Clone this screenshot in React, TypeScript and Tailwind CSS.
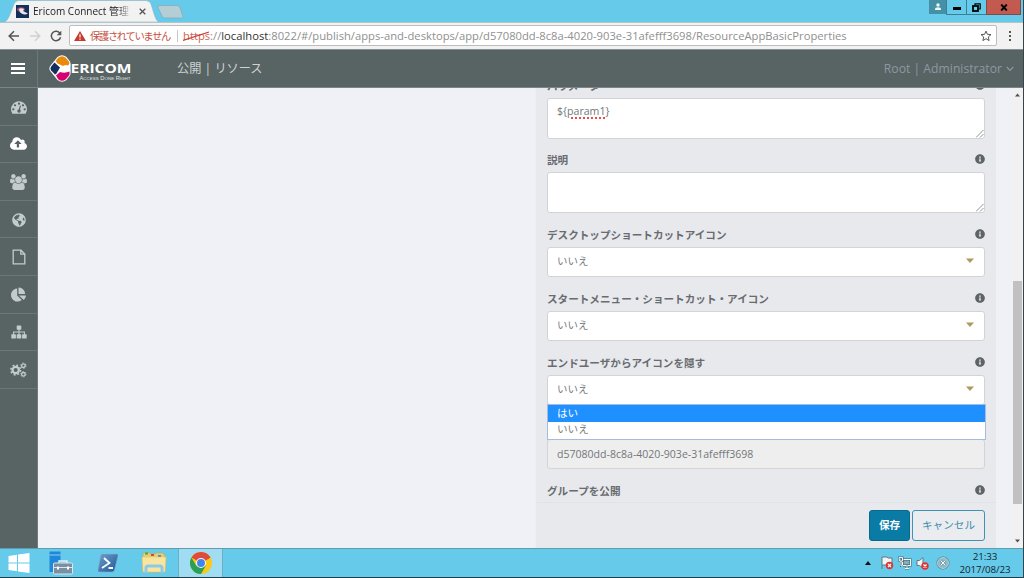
import type { ReactNode } from 'react';
import { FaChartPie, FaGlobeAmericas, FaInfoCircle } from 'react-icons/fa';

//SIDEBAR ICONS
const DashboardIcon = () => (
	<svg viewBox="0 0 1792 1792" className="w-4 h-4" fill="currentColor">
		<path d="M384 1152q0-53-37.5-90.5t-90.5-37.5-90.5 37.5-37.5 90.5 37.5 90.5 90.5 37.5 90.5-37.5 37.5-90.5zm192-448q0-53-37.5-90.5t-90.5-37.5-90.5 37.5-37.5 90.5 37.5 90.5 90.5 37.5 90.5-37.5 37.5-90.5zm428 481l101-382q6-26-7.5-48.5t-38.5-29.5-48 6.5-30 39.5l-101 382q-60 5-107 43.5t-63 98.5q-20 77 20 146t117 89 146-20 89-117q16-60-6-117t-72-91zm660-33q0-53-37.5-90.5t-90.5-37.5-90.5 37.5-37.5 90.5 37.5 90.5 90.5 37.5 90.5-37.5 37.5-90.5zm-640-640q0-53-37.5-90.5t-90.5-37.5-90.5 37.5-37.5 90.5 37.5 90.5 90.5 37.5 90.5-37.5 37.5-90.5zm448 192q0-53-37.5-90.5t-90.5-37.5-90.5 37.5-37.5 90.5 37.5 90.5 90.5 37.5 90.5-37.5 37.5-90.5zm320 448q0 261-141 483-19 29-54 29h-1402q-35 0-54-29-141-221-141-483 0-182 71-348t191-286 286-191 348-71 348 71 286 191 191 286 71 348z" />
	</svg>
);

const CloudIcon = () => (
	<svg viewBox="-64 0 1920 1792" className="w-[17px] h-4" fill="currentColor">
		<path d="M1216 864q0-14-9-23l-352-352q-9-9-23-9t-23 9l-351 351q-10 12-10 24 0 14 9 23t23 9h224v352q0 13 9.5 22.5t22.5 9.5h192q13 0 22.5-9.5t9.5-22.5v-352h224q13 0 22.5-9.5t9.5-22.5zm640 288q0 159-112.5 271.5t-271.5 112.5h-1088q-185 0-316.5-131.5t-131.5-316.5q0-130 70-240t188-165q-2-30-2-43 0-212 150-362t362-150q156 0 285.5 87t188.5 231q71-62 166-62 106 0 181 75t75 181q0 76-41 138 130 31 213.5 135.5t83.5 238.5z" />
	</svg>
);

const UsersIcon = () => (
	<svg viewBox="64 0 1920 1792" className="w-[17px] h-4" fill="currentColor">
		<path d="M657 896q-162 5-265 128h-134q-82 0-138-40.5t-56-118.5q0-353 124-353 6 0 43.5 21t97.5 42.5 119 21.5q67 0 133-23-5 37-5 66 0 139 81 256zm1071 637q0 120-73 189.5t-194 69.5h-874q-121 0-194-69.5t-73-189.5q0-53 3.5-103.5t14-109 26.5-108.5 43-97.5 62-81 85.5-53.5 111.5-20q10 0 43 21.5t73 48 107 48 135 21.5 135-21.5 107-48 73-48 43-21.5q61 0 111.5 20t85.5 53.5 62 81 43 97.5 26.5 108.5 14 109 3.5 103.5zm-1024-1277q0 106-75 181t-181 75-181-75-75-181 75-181 181-75 181 75 75 181zm704 384q0 159-112.5 271.5t-271.5 112.5-271.5-112.5-112.5-271.5 112.5-271.5 271.5-112.5 271.5 112.5 112.5 271.5zm576 225q0 78-56 118.5t-138 40.5h-134q-103-123-265-128 81-117 81-256 0-29-5-66 66 23 133 23 59 0 119-21.5t97.5-42.5 43.5-21q124 0 124 353zm-128-609q0 106-75 181t-181 75-181-75-75-181 75-181 181-75 181 75 75 181z" />
	</svg>
);

const FileIcon = () => (
	<svg viewBox="0 0 14 16" width="14" height="16" fill="none" stroke="currentColor" strokeWidth="1.300">
		<path d="M1.200 1.200H9L12.800 5V14.800H1.200ZM8.800 1.200V5.200H12.800" />
	</svg>
);

const SitemapIcon = () => (
	<svg viewBox="0 0 16 14" width="16" height="14" fill="currentColor">
		<rect x="5.700" y="0.500" width="4.600" height="4.200" rx="0.600" />
		<rect x="0.300" y="9.300" width="4.600" height="4.200" rx="0.600" />
		<rect x="5.700" y="9.300" width="4.600" height="4.200" rx="0.600" />
		<rect x="11.100" y="9.300" width="4.600" height="4.200" rx="0.600" />
		<path d="M8 4V10M2.600 10V7H13.400V10" fill="none" stroke="currentColor" strokeWidth="1.100" />
	</svg>
);

const CogsIcon = () => (
	<svg viewBox="0 0 17 16" width="17" height="16" fill="none" stroke="currentColor">
		<circle cx="5.700" cy="8" r="3.200" strokeWidth="2.200" />
		<circle cx="5.700" cy="8" r="4.900" strokeWidth="1.500" strokeDasharray="1.900 1.948" />
		<circle cx="13.400" cy="3.700" r="1.800" strokeWidth="1.300" />
		<circle cx="13.400" cy="3.700" r="2.700" strokeWidth="0.900" strokeDasharray="1.300 1.527" />
		<circle cx="13.400" cy="12.300" r="1.800" strokeWidth="1.300" />
		<circle cx="13.400" cy="12.300" r="2.700" strokeWidth="0.900" strokeDasharray="1.300 1.527" />
	</svg>
);

const menu = [
	{ id: 'dashboard', icon: <DashboardIcon /> },
	{ id: 'publish', icon: <CloudIcon />, active: true },
	{ id: 'users', icon: <UsersIcon /> },
	{ id: 'globe', icon: <FaGlobeAmericas size={14} /> },
	{ id: 'file', icon: <FileIcon /> },
	{ id: 'reports', icon: <FaChartPie size={15} /> },
	{ id: 'sitemap', icon: <SitemapIcon /> },
	{ id: 'settings', icon: <CogsIcon /> },
];

//BROWSER TABS + WINDOW BUTTONS
function TabStrip() {
	return (
		<div className="relative flex h-[22px] bg-[#66caea]">
			<svg className="absolute left-0 top-0" width="190" height="22">
				<path d="M4 22 C8 21 9 17 14 4 Q15.500 0.500 19 0.500 H146 Q149.500 0.500 151 4 C155 17 156 21 159 22 Z" fill="#f2f2f2" stroke="#8cb3bf" strokeWidth="0.6" />
				<path d="M159 5.500 H177 Q179 5.500 180 7.500 L182.500 15.500 Q183.500 18 181.500 18 H165 Q163 18 162 16 L158 7.500 Q157.500 5.500 159 5.500 Z" fill="#b5cdd5" stroke="#81aab7" strokeWidth="0.7" />
			</svg>
			<div className="relative flex h-[22px] w-[160px] items-center pl-4">
				<svg width="13" height="13" viewBox="0 0 13 13">
					<rect width="13" height="13" fill="#12305a" />
					<ellipse cx="5" cy="4.500" rx="3.800" ry="2.200" fill="#a84a68" />
					<path d="M3 4 Q5 2.500 8 4 L7 6 12 8.500 Q9 10.500 5.500 8.500 Q3 7 3 4Z" fill="#e8e7ee" />
				</svg>
				<div className="ml-[4px] w-[98px] whitespace-nowrap text-[10px] leading-[14px] text-[#222] [mask-image:linear-gradient(to_right,black_86%,transparent)]">
					Ericom Connect 管理コ
				</div>
				<svg className="ml-[8px]" width="7" height="7" viewBox="0 0 7 7">
					<path d="M.7 .7 6.300 6.300M6.300 .7 .7 6.300" stroke="#555" strokeWidth="1.300" />
				</svg>
			</div>
			<div className="ml-auto flex h-[15px] pr-[2px]">
				<div className="flex w-[17px] h-[14px] items-center justify-center bg-[#4690a5]">
					<svg width="8" height="8" viewBox="0 0 8 8" fill="#eef6f8">
						<circle cx="4" cy="2" r="1.700" />
						<path d="M1 7V5.500Q1 4.500 4 4.300 7 4.500 7 5.500V7Z" />
					</svg>
				</div>
				<div className="flex w-[21px] justify-center border border-t-0 border-[#3f7d90]">
					<div className="mt-[7px] h-[3px] w-[8px] bg-black" />
				</div>
				<div className="flex w-[19px] items-center justify-center border-b border-[#3f7d90]">
					<svg width="9" height="9" viewBox="0 0 9 9" fill="none" stroke="#000">
						<path d="M3 2V.800H8.200V6H7" strokeWidth="1.200" />
						<rect x="1" y="3" width="5" height="5" strokeWidth="1.800" />
					</svg>
				</div>
				<div className="flex w-[35px] items-center justify-center border border-t-0 border-[#7c4b4c] bg-[#c35a50]">
					<svg width="8" height="7" viewBox="0 0 8 7">
						<path d="M1.200 .5 6.800 6.500M6.800 .5 1.200 6.500" stroke="#000" strokeWidth="1.900" />
					</svg>
				</div>
			</div>
		</div>
	);
}

function AddressBar() {
	return (
		<div className="flex h-[27px] items-center border-t border-[#b4c5ca] bg-[#f2f2f2] pr-1">
			<svg className="ml-2 mb-px" width="12" height="12" viewBox="0 0 12 12" fill="none" stroke="#555" strokeWidth="1.500">
				<path d="M11 6H1.500M6 1.200 1.200 6 6 10.800" />
			</svg>
			<svg className="ml-[9px] mb-px" width="12" height="12" viewBox="0 0 12 12" fill="none" stroke="#d0d0d0" strokeWidth="1.400">
				<path d="M1 6H10.500M6 1.200 10.800 6 6 10.800" />
			</svg>
			<svg className="ml-[9px] mb-px" width="12" height="12" viewBox="0 0 12 12">
				<path d="M10 3.400A4.700 4.700 0 1 0 10.600 7.200" fill="none" stroke="#555" strokeWidth="1.500" />
				<path d="M11.300 .7V5.300H6.700Z" fill="#555" />
			</svg>
			<div className="ml-[7px] mb-px flex h-[21px] w-[928px] items-center rounded-[2px] border border-[#bdbdbd] bg-white pl-1">
				<svg width="12" height="10" viewBox="0 0 12 10" className="shrink-0">
					<path d="M6 0 12 10H0Z" fill="#c73a2d" />
					<path d="M6 3.200V6.500M6 7.400V8.700" stroke="#fff" strokeWidth="1.200" />
				</svg>
				<div className="ml-[4px] w-[82px] shrink-0 whitespace-nowrap text-[10.3px] tracking-[-1.35px] leading-[14px] text-[#c6503f]">保護されていません</div>
				<div className="ml-[5px] h-3 w-px bg-[#c8c8c8]" />
				<div className="ml-[5px] whitespace-nowrap text-[11.23px] leading-[14px] text-[#909090]">
					<span className="relative text-[#d26256]">
						https
						<svg className="absolute left-0 top-[2px]" width="27" height="12">
							<path d="M0 10.500 26 2" stroke="#c73a2d" strokeWidth="1.300" />
						</svg>
					</span>
					://<span className="text-[#333]">localhost</span>:8022/#/publish/apps-and-desktops/app/d57080dd-8c8a-4020-903e-31afefff3698/ResourceAppBasicProperties
				</div>
				<svg className="ml-auto mr-1" width="12" height="12" viewBox="0 0 12 12">
					<path d="M6 1.100 7.400 4.300 11 4.600 8.300 7 9.100 10.600 6 8.700 2.900 10.600 3.700 7 1 4.600 4.600 4.300Z" fill="none" stroke="#555" strokeWidth="1" />
				</svg>
			</div>
			<div className="ml-[12px] flex flex-col gap-[2px]">
				<div className="h-[2px] w-[2px] bg-[#555]" />
				<div className="h-[2px] w-[2px] bg-[#555]" />
				<div className="h-[2px] w-[2px] bg-[#555]" />
			</div>
		</div>
	);
}

function Logo() {
	return (
		<svg width="86" height="28" viewBox="0 0 86 28">
			<path d="M8.500 2Q13 -1.500 17.500 2L21 6.500Q22 8 21.500 13 22 19 21 20.500L17.500 25Q13 28.500 8.500 25L1.200 16Q-.5 13.500 1.200 11Z" fill="#fff" />
			<path d="M9.200 2.800Q13 -.3 16.800 2.800L20.200 7Q21 9 19 10.500Q17 9.500 14 11L8.500 8.500 6.700 6Z" fill="#ea8a0d" />
			<path d="M5.500 7.500 11 12.500 7.500 18.500 6 19.500 2 15.200Q.8 13.500 2 11.800Z" fill="#142f5e" />
			<path d="M7 20.500 11 17Q16 18.500 20.500 16.500 21 19 20 20.500L16.800 24.300Q13 27.300 9.200 24.300Z" fill="#d6006e" />
			<text x="21.500" y="18" textLength="61" lengthAdjust="spacingAndGlyphs" fontSize="12.800" fontWeight="700" fill="#fff" className="font-['Open_Sans',sans-serif]">ERICOM</text>
			<text x="30.500" y="24.500" textLength="51" lengthAdjust="spacingAndGlyphs" fontSize="5.200" fill="#e1e5e5" className="font-['Liberation_Sans',sans-serif] [font-variant:small-caps]">Access Done Right</text>
		</svg>
	);
}

function Header() {
	return (
		<div className="flex h-[39px] items-center border-y border-t-[#889092] border-b-[#7b8585] bg-[#586464]">
			<div className="flex h-full w-[38px] items-center border-r border-[#6d7878] pl-[11px]">
				<div className="flex flex-col gap-[2px]">
					<div className="h-[2.5px] w-[14px] bg-white" />
					<div className="h-[2.5px] w-[14px] bg-white" />
					<div className="h-[2.5px] w-[14px] bg-white" />
				</div>
			</div>
			<div className="ml-[11px]">
				<Logo />
			</div>
			<div className="ml-[42px] mt-px whitespace-nowrap text-[12.2px] leading-[18px] text-[#cdd2d2]">公開 | リソース</div>
			<div className="ml-auto whitespace-nowrap text-[12.2px] leading-[18px] text-[#8b98a3]">Root | Administrator</div>
			<svg className="ml-[4px] mr-[9px]" width="8" height="6" viewBox="0 0 8 6">
				<path d="M.8 1 4 4.300 7.200 1" fill="none" stroke="#8b98a3" strokeWidth="1.200" />
			</svg>
		</div>
	);
}

function Sidebar() {
	return (
		<div className="w-[38px] shrink-0 border-r border-[#707b7b] bg-[#586464]">
			{menu.map(item => (
				<div
					key={item.id}
					className={`flex h-[37.6px] items-center justify-center border-b border-[#6b7676] pt-px ${item.active ? 'text-white' : 'text-[#c3cbcb]'}`}
				>
					{item.icon}
				</div>
			))}
		</div>
	);
}

function Label({ children }: { children: ReactNode }) {
	return (
		<div className="flex h-[22px] items-start justify-between">
			<div className="whitespace-nowrap text-[10.6px] font-bold leading-[20px] text-[#686c70]">{children}</div>
			<FaInfoCircle size={10} className="mt-[4px] text-[#5e6365]" />
		</div>
	);
}

function TextArea({ children }: { children?: ReactNode }) {
	return (
		<div className="relative h-[41px] rounded-[3px] border border-[#d3d4d7] bg-white px-[9px] pt-[5px] text-[10.6px] leading-[14px] text-[#73777a]">
			{children}
			<svg className="absolute bottom-0 right-0" width="8" height="8" viewBox="0 0 8 8">
				<path d="M0 7.500 7.500 0M4 7.500 7.500 4" stroke="#777" strokeWidth="0.8" />
			</svg>
		</div>
	);
}

function Select({ value }: { value: string }) {
	return (
		<div className="flex h-[30px] items-center justify-between rounded-[3px] border border-[#d3d4d7] bg-white pl-[9px] pr-[10px] text-[10.5px] text-[#7b7e80]">
			<div className="mb-[2px] leading-[16px]">{value}</div>
			<svg width="8" height="5" viewBox="0 0 8 5" className="mb-[3px]">
				<path d="M0 .5H8L4 5Z" fill="#ac9b5b" />
			</svg>
		</div>
	);
}

function Form() {
	return (
		<div className="flex w-[461px] flex-col overflow-hidden border-l border-[#edeef2] bg-[#e8e9ed]">
			<div className="-mt-[12px] flex flex-col pl-[11px] pr-[11px]">
				<Label>パラメータ</Label>
				<TextArea>
					{'${'}
					<span className="underline decoration-[#f04848] decoration-dotted decoration-[1.5px] underline-offset-[2px]">param1</span>
					{'}'}
				</TextArea>
				<div className="mt-[11px]">
					<Label>説明</Label>
					<TextArea />
				</div>
				<div className="mt-3">
					<Label>デスクトップショートカットアイコン</Label>
					<Select value="いいえ" />
				</div>
				<div className="mt-3">
					<Label>スタートメニュー・ショートカット・アイコン</Label>
					<Select value="いいえ" />
				</div>
				<div className="relative mt-3">
					<Label>エンドユーザからアイコンを隠す</Label>
					<Select value="いいえ" />
					<div className="absolute left-0 -right-px top-[51px] z-10 h-[36px] border border-[#a5bce0] bg-white text-[10.6px]">
						<div className="h-[17px] bg-[#1e90ff] pl-[9px] leading-[17px] text-white">はい</div>
						<div className="h-[17px] pl-[9px] leading-[15px] text-[#7b7e80]">いいえ</div>
					</div>
				</div>
				<div className="mt-[34px] h-[30px] rounded-[3px] border border-[#d3d4d7] bg-[#eeeeee] pl-[9px] text-[10.55px] leading-[28px] text-[#73777a]">
					d57080dd-8c8a-4020-903e-31afefff3698
				</div>
				<div className="mt-3 h-[21px]">
					<Label>グループを公開</Label>
				</div>
			</div>
			<div className="flex flex-1 items-start justify-end gap-[2px] border-t border-[#e1e2e6] pr-[11px] pt-[7px]">
				<button className="h-[31px] w-[41px] rounded-[3px] border border-[#066a8e] bg-[#097ba4] text-[10.6px] font-bold text-white">保存</button>
				<button className="h-[31px] w-[73px] rounded-[3px] border border-[#3c93b2] bg-[#ebecf0] text-[10.6px] text-[#3c8dab]">キャンセル</button>
			</div>
		</div>
	);
}

function ScrollBar() {
	return (
		<div className="flex w-[11px] flex-col items-center bg-[#f1f1f1] py-[5px]">
			<svg width="5" height="4" viewBox="0 0 5 4">
				<path d="M2.500 .5 5 3.500H0Z" fill="#505050" />
			</svg>
			<div className="mt-[184px] h-[223px] w-[9px] bg-[#c1c1c1]" />
			<svg className="mt-auto" width="5" height="4" viewBox="0 0 5 4">
				<path d="M2.500 3.500 5 .5H0Z" fill="#505050" />
			</svg>
		</div>
	);
}

//WINDOWS TASKBAR
function Taskbar() {
	return (
		<div className="flex h-[30px] items-center border-t border-b border-t-[#5f9dac] border-b-[#243c45] bg-[#66caea]">
			<svg className="ml-[8px]" width="22" height="20" viewBox="0 0 22 20" fill="#fff">
				<path d="M.5 3 9 1.700V9.500H.5ZM10 1.500 21.500 0V9.500H10ZM.5 10.500H9V18.200L.5 17ZM10 10.500H21.500V20L10 18.400Z" />
			</svg>
			<svg className="ml-[19px]" width="24" height="24" viewBox="0 0 24 24">
				<path d="M.5 .5H11.500V21H.5Z" fill="#1e88da" />
				<path d="M.5 4H11.500" stroke="#8fd1f4" />
				<path d="M10 12V10H18V12" fill="none" stroke="#e6edf1" strokeWidth="1.500" />
				<rect x="4.500" y="12" width="19" height="11" rx="1" fill="#7890a2" stroke="#dce6ec" />
				<path d="M5 16.500H23" stroke="#dce6ec" />
				<rect x="8" y="15.500" width="2" height="3" fill="#fff" />
				<rect x="18" y="15.500" width="2" height="3" fill="#fff" />
			</svg>
			<svg className="ml-[24px]" width="22" height="20" viewBox="0 0 22 20">
				<defs>
					<linearGradient id="ps" x1="0" y1="0" x2="1" y2="1">
						<stop offset="0" stopColor="#6f9fcb" />
						<stop offset="1" stopColor="#1d5697" />
					</linearGradient>
				</defs>
				<path d="M5 1H20Q21.500 1 21 3L17.500 17Q17 19 15 19H2Q.5 19 1 17L3.500 3Q4 1 5 1Z" fill="url(#ps)" stroke="#86aeca" strokeWidth=".6" />
				<path d="M7 5 12.500 10 5 15M11.500 15H16" fill="none" stroke="#fff" strokeWidth="1.800" />
			</svg>
			<svg className="ml-[22px]" width="26" height="24" viewBox="0 0 26 24">
				<path d="M2 3 3 1.500H8L9.500 3H14L15 2H22L24 5V21H2Z" fill="#e8cd72" stroke="#c8a74b" strokeWidth=".6" />
				<path d="M4 2.500H7" stroke="#39ad46" strokeWidth="2" />
				<path d="M10 4H13" stroke="#d94735" strokeWidth="2" />
				<path d="M17 5H20" stroke="#3e92d2" strokeWidth="2" />
				<path d="M1 6H25L24 21H2Z" fill="#f8e6a0" stroke="#dfc26a" strokeWidth=".6" />
				<path d="M5 22V17Q5 15 7 15H19Q21 15 21 17V22" fill="none" stroke="#8ec9e9" strokeWidth="3" />
			</svg>
			<div className="ml-[11px] flex h-full w-[45px] items-center justify-center border-x border-[#6eaec2] bg-[#a0ddf3]">
				<svg width="22" height="22" viewBox="0 0 24 24">
					<circle cx="12" cy="12" r="12" fill="#fbc916" />
					<path d="M12 12 1.600 6A12 12 0 0 1 22.400 6Z" fill="#df4b3d" />
					<path d="M12 12 17.200 15 12 24A12 12 0 0 1 1.600 6L6.800 15Z" fill="#299f58" />
					<path d="M12 6H22.400L17 9Z" fill="#df4b3d" />
					<circle cx="12" cy="12" r="5.500" fill="#f3f7fa" />
					<circle cx="12" cy="12" r="4.300" fill="#4285e8" />
				</svg>
			</div>
			<div className="ml-auto flex items-center">
				<svg width="6" height="4" viewBox="0 0 6 4">
					<path d="M3 0 6 4H0Z" fill="#111" />
				</svg>
				<svg className="ml-[9px]" width="14" height="14" viewBox="0 0 14 14">
					<path d="M2 13V1H7L8 2H12V9H2" fill="#f0f4f5" stroke="#63777e" strokeWidth="1" />
					<circle cx="9.500" cy="9.500" r="3.700" fill="#dc3434" />
					<path d="m8 8 3 3m0-3-3 3" stroke="#fff" strokeWidth="1.200" />
				</svg>
				<svg className="ml-[4px]" width="14" height="14" viewBox="0 0 14 14" fill="none" stroke="#f4f8f9">
					<rect x="4.500" y="3.500" width="8" height="6" fill="#80aebb" stroke="#4d6870" strokeWidth="2.200" />
					<rect x="4.500" y="3.500" width="8" height="6" />
					<path d="M7 12.500H11M9 9.500V12M1 1.500H4.500V5H1.500ZM3 5V10H5" stroke="#4d6870" strokeWidth="2" />
					<path d="M7 12.500H11M9 9.500V12M1 1.500H4.500V5H1.500ZM3 5V10H5" />
				</svg>
				<svg className="ml-[4px]" width="14" height="14" viewBox="0 0 14 14">
					<path d="M1 4.500H3.500L7 1.500V12L3.500 9.500H1Z" fill="#f3f7f8" stroke="#63777e" />
					<circle cx="9" cy="10" r="3.700" fill="#dc3434" />
					<path d="m7.500 8.500 3 3m0-3-3 3" stroke="#fff" strokeWidth="1.200" />
				</svg>
				<svg className="ml-[6px]" width="14" height="14" viewBox="0 0 14 14" fill="none">
					<circle cx="7" cy="7" r="5.700" fill="#86bfd1" stroke="#557c88" strokeWidth="1.600" />
					<circle cx="7" cy="7" r="5.400" stroke="#e2f2f7" strokeWidth=".8" />
					<path d="m4.700 4.700 4.600 4.600m0-4.600-4.600 4.600" stroke="#47717e" strokeWidth="2.200" />
					<path d="m4.700 4.700 4.600 4.600m0-4.600-4.600 4.600" stroke="#fff" strokeWidth="1.200" />
				</svg>
				<div className="ml-[9px] mr-[12px] w-[52px] whitespace-nowrap text-center text-[9.8px] leading-[13px] tracking-[-0.1px] text-[#14262d]">
					<div>21:33</div>
					<div>2017/08/23</div>
				</div>
			</div>
		</div>
	);
}

export default function App() {
	return (
		<div className="flex h-[578px] w-[1024px] flex-col overflow-hidden border-r border-[#384448] bg-[#f0f1f7] font-['Open_Sans','Noto_Sans_CJK_JP',sans-serif]">
			<TabStrip />
			<AddressBar />
			<Header />
			<div className="flex h-[460px]">
				<Sidebar />
				<div className="flex flex-1 justify-end pr-[16px]">
					<Form />
				</div>
				<ScrollBar />
			</div>
			<Taskbar />
		</div>
	);
}
